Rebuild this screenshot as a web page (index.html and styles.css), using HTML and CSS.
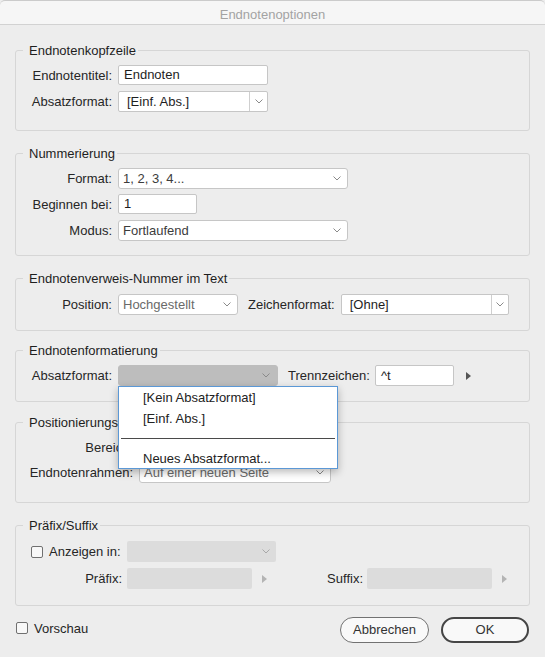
FILE: index.html
```html
<!DOCTYPE html>
<html lang="de">
<head>
<meta charset="utf-8">
<title>Endnotenoptionen</title>
<link rel="stylesheet" href="styles.css">
</head>
<body>
<div class="window">
  <div class="titlebar">Endnotenoptionen</div>
  <div class="content">

    <fieldset class="group g1">
      <legend>Endnotenkopfzeile</legend>
      <div class="row h20">
        <span class="lbl">Endnotentitel:</span>
        <div class="field w150">Endnoten</div>
      </div>
      <div class="row mt6">
        <span class="lbl">Absatzformat:</span>
        <div class="combo w150"><span class="val">[Einf. Abs.]</span><span class="cbtn"><svg class="chev" width="8" height="5" viewBox="0 0 8 5"><path d="M0.5 0.5 L4 4 L7.5 0.5"/></svg></span></div>
      </div>
    </fieldset>

    <fieldset class="group g2">
      <legend>Nummerierung</legend>
      <div class="row">
        <span class="lbl">Format:</span>
        <div class="popup w230"><span class="val">1, 2, 3, 4...</span><svg class="chev" width="8" height="5" viewBox="0 0 8 5"><path d="M0.5 0.5 L4 4 L7.5 0.5"/></svg></div>
      </div>
      <div class="row h20 mt5">
        <span class="lbl">Beginnen bei:</span>
        <div class="field w79">1</div>
      </div>
      <div class="row mt6">
        <span class="lbl">Modus:</span>
        <div class="popup w230"><span class="val">Fortlaufend</span><svg class="chev" width="8" height="5" viewBox="0 0 8 5"><path d="M0.5 0.5 L4 4 L7.5 0.5"/></svg></div>
      </div>
    </fieldset>

    <fieldset class="group g3">
      <legend>Endnotenverweis-Nummer im Text</legend>
      <div class="row">
        <span class="lbl">Position:</span>
        <div class="popup w120 muted"><span class="val">Hochgestellt</span><svg class="chev" width="8" height="5" viewBox="0 0 8 5"><path d="M0.5 0.5 L4 4 L7.5 0.5"/></svg></div>
        <span class="lbl-in ml10 mr6">Zeichenformat:</span>
        <div class="combo w168"><span class="val pl8">[Ohne]</span><span class="cbtn w17"><svg class="chev" width="8" height="5" viewBox="0 0 8 5"><path d="M0.5 0.5 L4 4 L7.5 0.5"/></svg></span></div>
      </div>
    </fieldset>

    <fieldset class="group g4">
      <legend>Endnotenformatierung</legend>
      <div class="row">
        <span class="lbl">Absatzformat:</span>
        <div class="popup pressed w160">
          <span class="val"></span><svg class="chev" width="8" height="5" viewBox="0 0 8 5"><path d="M0.5 0.5 L4 4 L7.5 0.5"/></svg>
          <div class="menu">
            <div class="item">[Kein Absatzformat]</div>
            <div class="item">[Einf. Abs.]</div>
            <div class="sep"></div>
            <div class="item last">Neues Absatzformat...</div>
          </div>
        </div>
        <span class="lbl-in ml10 mr5">Trennzeichen:</span>
        <div class="field w79 h21">^t</div>
        <span class="tri ml12"></span>
      </div>
    </fieldset>

    <fieldset class="group g5">
      <legend>Positionierungsoptionen</legend>
      <div class="row">
        <span class="lbl wide">Bereich:</span>
        <div class="popup w192"><span class="val"></span><svg class="chev" width="8" height="5" viewBox="0 0 8 5"><path d="M0.5 0.5 L4 4 L7.5 0.5"/></svg></div>
      </div>
      <div class="row mt4">
        <span class="lbl wide">Endnotenrahmen:</span>
        <div class="popup w192 muted"><span class="val">Auf einer neuen Seite</span><svg class="chev" width="8" height="5" viewBox="0 0 8 5"><path d="M0.5 0.5 L4 4 L7.5 0.5"/></svg></div>
      </div>
    </fieldset>

    <fieldset class="group g6">
      <legend>Präfix/Suffix</legend>
      <div class="row">
        <span class="lbl6 left"><span class="check"></span><span class="ml6">Anzeigen in:</span></span>
        <div class="disabled w149"><svg class="chev light" width="8" height="5" viewBox="0 0 8 5"><path d="M0.5 0.5 L4 4 L7.5 0.5"/></svg></div>
      </div>
      <div class="row mt6">
        <span class="lbl6">Präfix:</span>
        <div class="disabled w125"></div>
        <span class="tri light ml10"></span>
        <span class="lbl-suffix">Suffix:</span>
        <div class="disabled w125"></div>
        <span class="tri light ml10"></span>
      </div>
    </fieldset>

    <div class="footer">
      <label class="preview"><span class="check"></span><span class="ml6">Vorschau</span></label>
      <div class="buttons">
        <div class="btn cancel">Abbrechen</div>
        <div class="btn ok">OK</div>
      </div>
    </div>

  </div>
</div>
</body>
</html>
```

FILE: styles.css
```css
* { box-sizing: border-box; }

html, body {
  margin: 0;
  padding: 0;
  background: #ededed;
}

body {
  font-family: "Liberation Sans", Arial, sans-serif;
  font-size: 13px;
  color: #262626;
}

.window {
  width: 545px;
  height: 657px;
  background: #ededed;
  overflow: hidden;
}

.titlebar {
  height: 25px;
  border-top: 1px solid #cbcbcb;
  border-bottom: 1px solid #d2d2d2;
  background: #f6f6f6;
  color: #a3a3a3;
  text-align: center;
  padding-top: 4px;
  line-height: 19px;
  border-radius: 5px 5px 0 0;
}

.content {
  padding: 18px 15px 0;
}

/* group boxes */
.group {
  margin: 0;
  min-width: 0;
  border: 1px solid #d6d6d6;
  border-radius: 3px;
  padding: 7px 13px 0 13px;
}

.group legend {
  padding: 0 2px 0 6px;
  margin-left: -6px;
  height: 15px;
  line-height: 15px;
  color: #1e1e1e;
}

.g1 { padding-bottom: 18px; }
.g2 { margin-top: 15px; padding-bottom: 14px; }
.g3 { margin-top: 15px; padding-top: 8px; padding-bottom: 15px; }
.g4 { margin-top: 12px; padding-bottom: 15px; }
.g5 { margin-top: 13px; padding-bottom: 19px; }
.g6 { margin-top: 15px; padding-top: 8px; padding-bottom: 16px; }

/* rows */
.row {
  display: flex;
  align-items: center;
  height: 21px;
}
.row.h20 { height: 20px; }

.mt4 { margin-top: 4px; }
.mt5 { margin-top: 5px; }
.mt6 { margin-top: 6px; }
.ml6 { margin-left: 6px; }
.ml10 { margin-left: 10px; }
.ml12 { margin-left: 12px; }
.mr5 { margin-right: 5px; }
.mr6 { margin-right: 6px; }

.lbl {
  flex: none;
  width: 83px;
  margin-right: 6px;
  text-align: right;
  white-space: nowrap;
}
.lbl.wide { width: 104px; }

.lbl6 {
  flex: none;
  width: 93px;
  margin-right: 5px;
  text-align: right;
  white-space: nowrap;
  display: flex;
  align-items: center;
  justify-content: flex-end;
}
.lbl6.left { justify-content: flex-start; padding-left: 2px; }

.lbl-in { flex: none; white-space: nowrap; }

.lbl-suffix {
  flex: none;
  width: 96px;
  margin-right: 4px;
  text-align: right;
}

/* widths */
.w79 { width: 79px; }
.w120 { width: 120px; }
.w125 { width: 125px; }
.w149 { width: 149px; }
.w150 { width: 150px; }
.w160 { width: 160px; }
.w168 { width: 168px; }
.w192 { width: 192px; }
.w230 { width: 230px; }

/* controls */
.field {
  flex: none;
  height: 20px;
  background: #fff;
  border: 1px solid #c6c6c6;
  border-radius: 2px;
  padding-left: 5px;
  line-height: 18px;
  color: #1e1e1e;
}
.field.h21 { height: 21px; line-height: 19px; }

.combo {
  flex: none;
  height: 21px;
  display: flex;
  background: #fff;
  border: 1px solid #c6c6c6;
  border-radius: 2px;
}
.combo .val {
  flex: 1;
  padding-left: 8px;
  line-height: 19px;
  color: #1e1e1e;
}
.combo .cbtn {
  flex: none;
  width: 18px;
  border-left: 1px solid #cfcfcf;
  display: flex;
  align-items: center;
  justify-content: center;
}
.combo .cbtn.w17 { width: 17px; }

.popup {
  position: relative;
  flex: none;
  height: 21px;
  display: flex;
  align-items: center;
  justify-content: space-between;
  background: #fff;
  border: 1px solid #c6c6c6;
  border-radius: 3px;
  padding: 0 6px 0 4px;
  color: #3c3c3c;
}
.popup.muted { color: #6a6a6a; }
.popup.pressed {
  background: #bdbdbd;
  border-color: #bdbdbd;
  padding-right: 7px;
}

.chev { flex: none; display: block; }
.chev path { fill: none; stroke: #8a8a8a; stroke-width: 1; }
.chev.light path { stroke: #a8a8a8; }

.disabled {
  flex: none;
  height: 21px;
  background: #dcdcdc;
  border-radius: 2px;
  display: flex;
  align-items: center;
  justify-content: flex-end;
  padding-right: 6px;
}

.tri {
  flex: none;
  width: 0;
  height: 0;
  border-left: 5px solid #555;
  border-top: 4px solid transparent;
  border-bottom: 4px solid transparent;
}
.tri.light { border-left-color: #b4b4b4; }

.check {
  flex: none;
  display: inline-block;
  width: 12px;
  height: 12px;
  border: 1px solid #707070;
  border-radius: 2px;
  background: #f8f8f8;
}

/* popup menu */
.menu {
  position: absolute;
  left: -1px;
  top: 20px;
  width: 220px;
  height: 83px;
  background: #fff;
  border: 1px solid #5b98d6;
  box-shadow: 0 3px 8px rgba(0, 0, 0, 0.28);
  z-index: 10;
  color: #222;
}
.menu .item {
  height: 21px;
  line-height: 21px;
  padding-left: 24px;
  white-space: nowrap;
}
.menu .item.last { height: 19px; line-height: 19px; }
.menu .sep {
  height: 20px;
  margin: 0 2px;
  position: relative;
}
.menu .sep::after {
  content: "";
  display: block;
  position: absolute;
  left: 0;
  right: 0;
  top: 9px;
  height: 1px;
  background: #4a4a4a;
}

/* footer */
.footer {
  display: flex;
  justify-content: space-between;
  align-items: flex-start;
  margin: 11px 1px 0 1px;
}

.preview {
  display: flex;
  align-items: center;
  height: 20px;
  margin-top: 1px;
  color: #262626;
}

.buttons {
  display: flex;
  gap: 12px;
}

.btn {
  height: 26px;
  border-radius: 13px;
  background: #f9f9f9;
  text-align: center;
  color: #333;
}
.btn.cancel {
  width: 89px;
  border: 1px solid #727272;
  line-height: 24px;
}
.btn.ok {
  width: 88px;
  border: 2px solid #454545;
  line-height: 22px;
}
```
